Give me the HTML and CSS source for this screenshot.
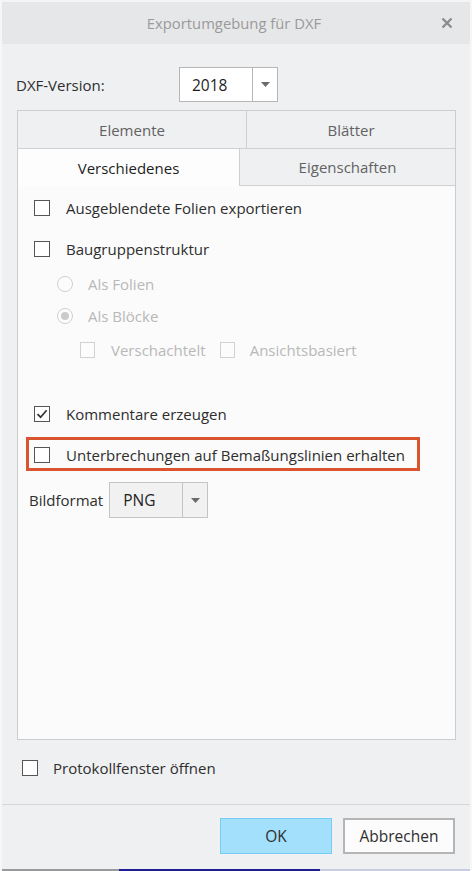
FILE: index.html
```html
<!DOCTYPE html>
<html lang="de">
<head>
<meta charset="utf-8">
<title>Exportumgebung für DXF</title>
<link rel="stylesheet" href="styles.css">
</head>
<body>
<div class="window">
  <div class="titlebar">
    <span class="title">Exportumgebung für DXF</span>
    <svg class="close" width="12" height="12" viewBox="0 0 12 12"><path d="M1.5 1.5 L10.5 10.5 M10.5 1.5 L1.5 10.5" stroke="#8c8c8c" stroke-width="2.4" stroke-linecap="butt"/></svg>
  </div>
  <div class="main">
    <div class="version-row">
      <span class="label version-label">DXF-Version:</span>
      <div class="combo combo-white">
        <span class="combo-value">2018</span>
        <span class="combo-btn"><svg width="9" height="5" viewBox="0 0 9 5"><path d="M0 0 H9 L4.5 5 Z" fill="#6a6a6a"/></svg></span>
      </div>
    </div>
    <div class="tabpanel">
      <div class="tabrow tabrow-back">
        <div class="tab tab-first">Elemente</div>
        <div class="tab tab-rest">Blätter</div>
      </div>
      <div class="tabrow tabrow-front">
        <div class="tab tab-active">Verschiedenes</div>
        <div class="tab tab-inactive">Eigenschaften</div>
      </div>
      <div class="tabcontent">
        <div class="row row-1">
          <span class="cb"></span><span class="text">Ausgeblendete Folien exportieren</span>
        </div>
        <div class="row row-2">
          <span class="cb"></span><span class="text">Baugruppenstruktur</span>
        </div>
        <div class="row row-radio1 disabled">
          <span class="radio"></span><span class="text">Als Folien</span>
        </div>
        <div class="row row-radio2 disabled">
          <span class="radio radio-on"></span><span class="text">Als Blöcke</span>
        </div>
        <div class="row row-sub disabled">
          <span class="cb cb-disabled"></span><span class="text sub-text">Verschachtelt</span>
          <span class="cb cb-disabled cb-second"></span><span class="text">Ansichtsbasiert</span>
        </div>
        <div class="row row-comment">
          <span class="cb"><svg width="14" height="14" viewBox="0 0 14 14"><path d="M2.5 7.2 L5.6 10.2 L11.6 3.3" fill="none" stroke="#333" stroke-width="1.7"/></svg></span><span class="text">Kommentare erzeugen</span>
        </div>
        <div class="row row-highlight">
          <span class="cb"></span><span class="text">Unterbrechungen auf Bemaßungslinien erhalten</span>
        </div>
        <div class="row row-format">
          <span class="label">Bildformat</span>
          <div class="combo combo-grey">
            <span class="combo-value">PNG</span>
            <span class="combo-btn"><svg width="9" height="5" viewBox="0 0 9 5"><path d="M0 0 H9 L4.5 5 Z" fill="#6a6a6a"/></svg></span>
          </div>
        </div>
      </div>
    </div>
    <div class="row row-log">
      <span class="cb"></span><span class="text">Protokollfenster öffnen</span>
    </div>
  </div>
  <div class="footer">
    <button class="btn btn-ok">OK</button>
    <button class="btn btn-cancel">Abbrechen</button>
  </div>
  <div class="taskstrip"><span class="strip-blue"></span><span class="strip-rest"></span></div>
</div>
</body>
</html>
```
FILE: styles.css
```css
* { box-sizing: border-box; }
html, body { margin: 0; padding: 0; }
body {
  background: #eff0f2;
  font-family: "Open Sans", "Noto Sans", "Liberation Sans", sans-serif;
  font-size: 15px;
  color: #2e2e2e;
}
.window {
  width: 472px;
  height: 871px;
  display: flex;
  flex-direction: column;
  background: #eff0f2;
  border-top: 2px solid #f5f5f6;
  border-left: 2px solid #f7f7f8;
  border-right: 2px solid #f7f7f8;
  overflow: hidden;
}
.titlebar {
  height: 42px;
  background: #e6e7e9;
  display: flex;
  align-items: center;
  justify-content: center;
  position: relative;
}
.title {
  color: #9a9a9a;
  font-size: 14.8px;
  margin-left: -4px;
}
.close {
  position: absolute;
  right: 17px;
  top: 15px;
}
.main {
  flex: 1;
  display: flex;
  flex-direction: column;
  padding: 23px 14px 0 15px;
}
.version-row {
  height: 35px;
  display: flex;
  align-items: center;
}
.label {
  font-size: 15px;
  color: #2e2e2e;
}
.version-label {
  width: 163px;
  margin-left: -1px;
}
.combo {
  display: flex;
  height: 100%;
  border: 1px solid #b6b6b6;
}
.combo-white {
  width: 99px;
  background: #ffffff;
  height: 35px;
}
.combo-value {
  flex: 1;
  display: flex;
  align-items: center;
  padding-left: 12px;
  font-size: 15.5px;
  color: #1e1e1e;
}
.combo-btn {
  width: 25px;
  border-left: 1px solid #b6b6b6;
  display: flex;
  align-items: center;
  justify-content: center;
}
.tabpanel {
  margin-top: 8px;
  height: 630px;
  border: 1px solid #cdcdcd;
  background: #fbfbfb;
  display: flex;
  flex-direction: column;
}
.tabrow {
  display: flex;
}
.tabrow-back {
  height: 38px;
  background: #eff0f2;
  border-bottom: 1px solid #d0d0d0;
}
.tabrow-front {
  height: 37px;
}
.tab {
  display: flex;
  align-items: center;
  justify-content: center;
  font-size: 15px;
  color: #626262;
}
.tab-first {
  width: 229px;
  border-right: 1px solid #d0d0d0;
}
.tab-rest { flex: 1; }
.tab-active {
  width: 222px;
  background: #fdfdfd;
  border-right: 1px solid #d0d0d0;
  color: #1e1e1e;
}
.tab-inactive {
  flex: 1;
  background: #eff0f2;
  border-bottom: 1px solid #d0d0d0;
}
.tabcontent {
  flex: 1;
  background: #fbfbfb;
  padding-top: 8px;
  display: flex;
  flex-direction: column;
}
.row {
  height: 28px;
  display: flex;
  align-items: center;
  padding-left: 16px;
}
.text {
  font-size: 15px;
  color: #2e2e2e;
}
.cb {
  width: 16px;
  height: 16px;
  border: 1px solid #555;
  background: #fff;
  margin-right: 16px;
  flex: none;
  display: flex;
  align-items: center;
  justify-content: center;
}
.row-2 { margin-top: 13px; }
.row-radio1 { margin-top: 7px; padding-left: 39px; }
.row-radio2 { margin-top: 4px; padding-left: 39px; }
.row-sub { margin-top: 6px; padding-left: 62px; }
.row-comment { margin-top: 36px; }
.radio {
  width: 16px;
  height: 16px;
  border-radius: 50%;
  border: 1px solid #d0d0d0;
  background: #fcfcfc;
  margin-right: 15px;
  display: flex;
  align-items: center;
  justify-content: center;
}
.radio-on::after {
  content: "";
  width: 8px;
  height: 8px;
  border-radius: 50%;
  background: #cbcbcb;
}
.disabled .text { color: #b8b8b8; }
.cb-disabled {
  border-color: #d2d2d2;
  background: #fcfcfc;
  width: 15px;
  height: 16px;
}
.sub-text { margin-right: 14px; }
.cb-second { margin-right: 15px; }
.row-highlight {
  margin-top: 9px;
  margin-left: 8px;
  width: 394px;
  height: 34px;
  border: 3px solid #d9542f;
  padding-left: 5px;
  padding-top: 1px;
}
.row-format {
  margin-top: 11px;
  height: 36px;
  padding-left: 11px;
}
.row-format .label { margin-right: 6px; }
.combo-grey {
  width: 99px;
  height: 36px;
  background: #f1f1f1;
  border-color: #c4c4c4;
}
.combo-grey .combo-value { padding-left: 13px; font-size: 15.5px; }
.combo-grey .combo-btn { border-left-color: #c4c4c4; }
.row-log {
  margin-top: 14px;
  padding-left: 5px;
}
.row-log .cb { margin-right: 15px; }
.footer {
  height: 65px;
  border-top: 1px solid #d6d6d6;
  display: flex;
  justify-content: flex-end;
  align-items: flex-start;
  padding: 13px 15px 0 0;
  gap: 11px;
}
.btn {
  height: 36px;
  width: 112px;
  font-family: inherit;
  font-size: 15.5px;
  color: #2e2e2e;
  padding: 0;
}
.btn-ok {
  background: #a2e0fc;
  border: 1px solid #77cbf4;
}
.btn-cancel {
  background: #fcfcfc;
  border: 2px solid #b5b5b5;
}
.taskstrip {
  height: 2px;
  background: #9a9a9a;
  margin: 0 -2px;
  display: flex;
  padding-left: 119px;
}
.strip-blue {
  width: 201px;
  background: #1f1d96;
}
.strip-rest {
  flex: 1;
  background: #c9cbe0;
}
```
